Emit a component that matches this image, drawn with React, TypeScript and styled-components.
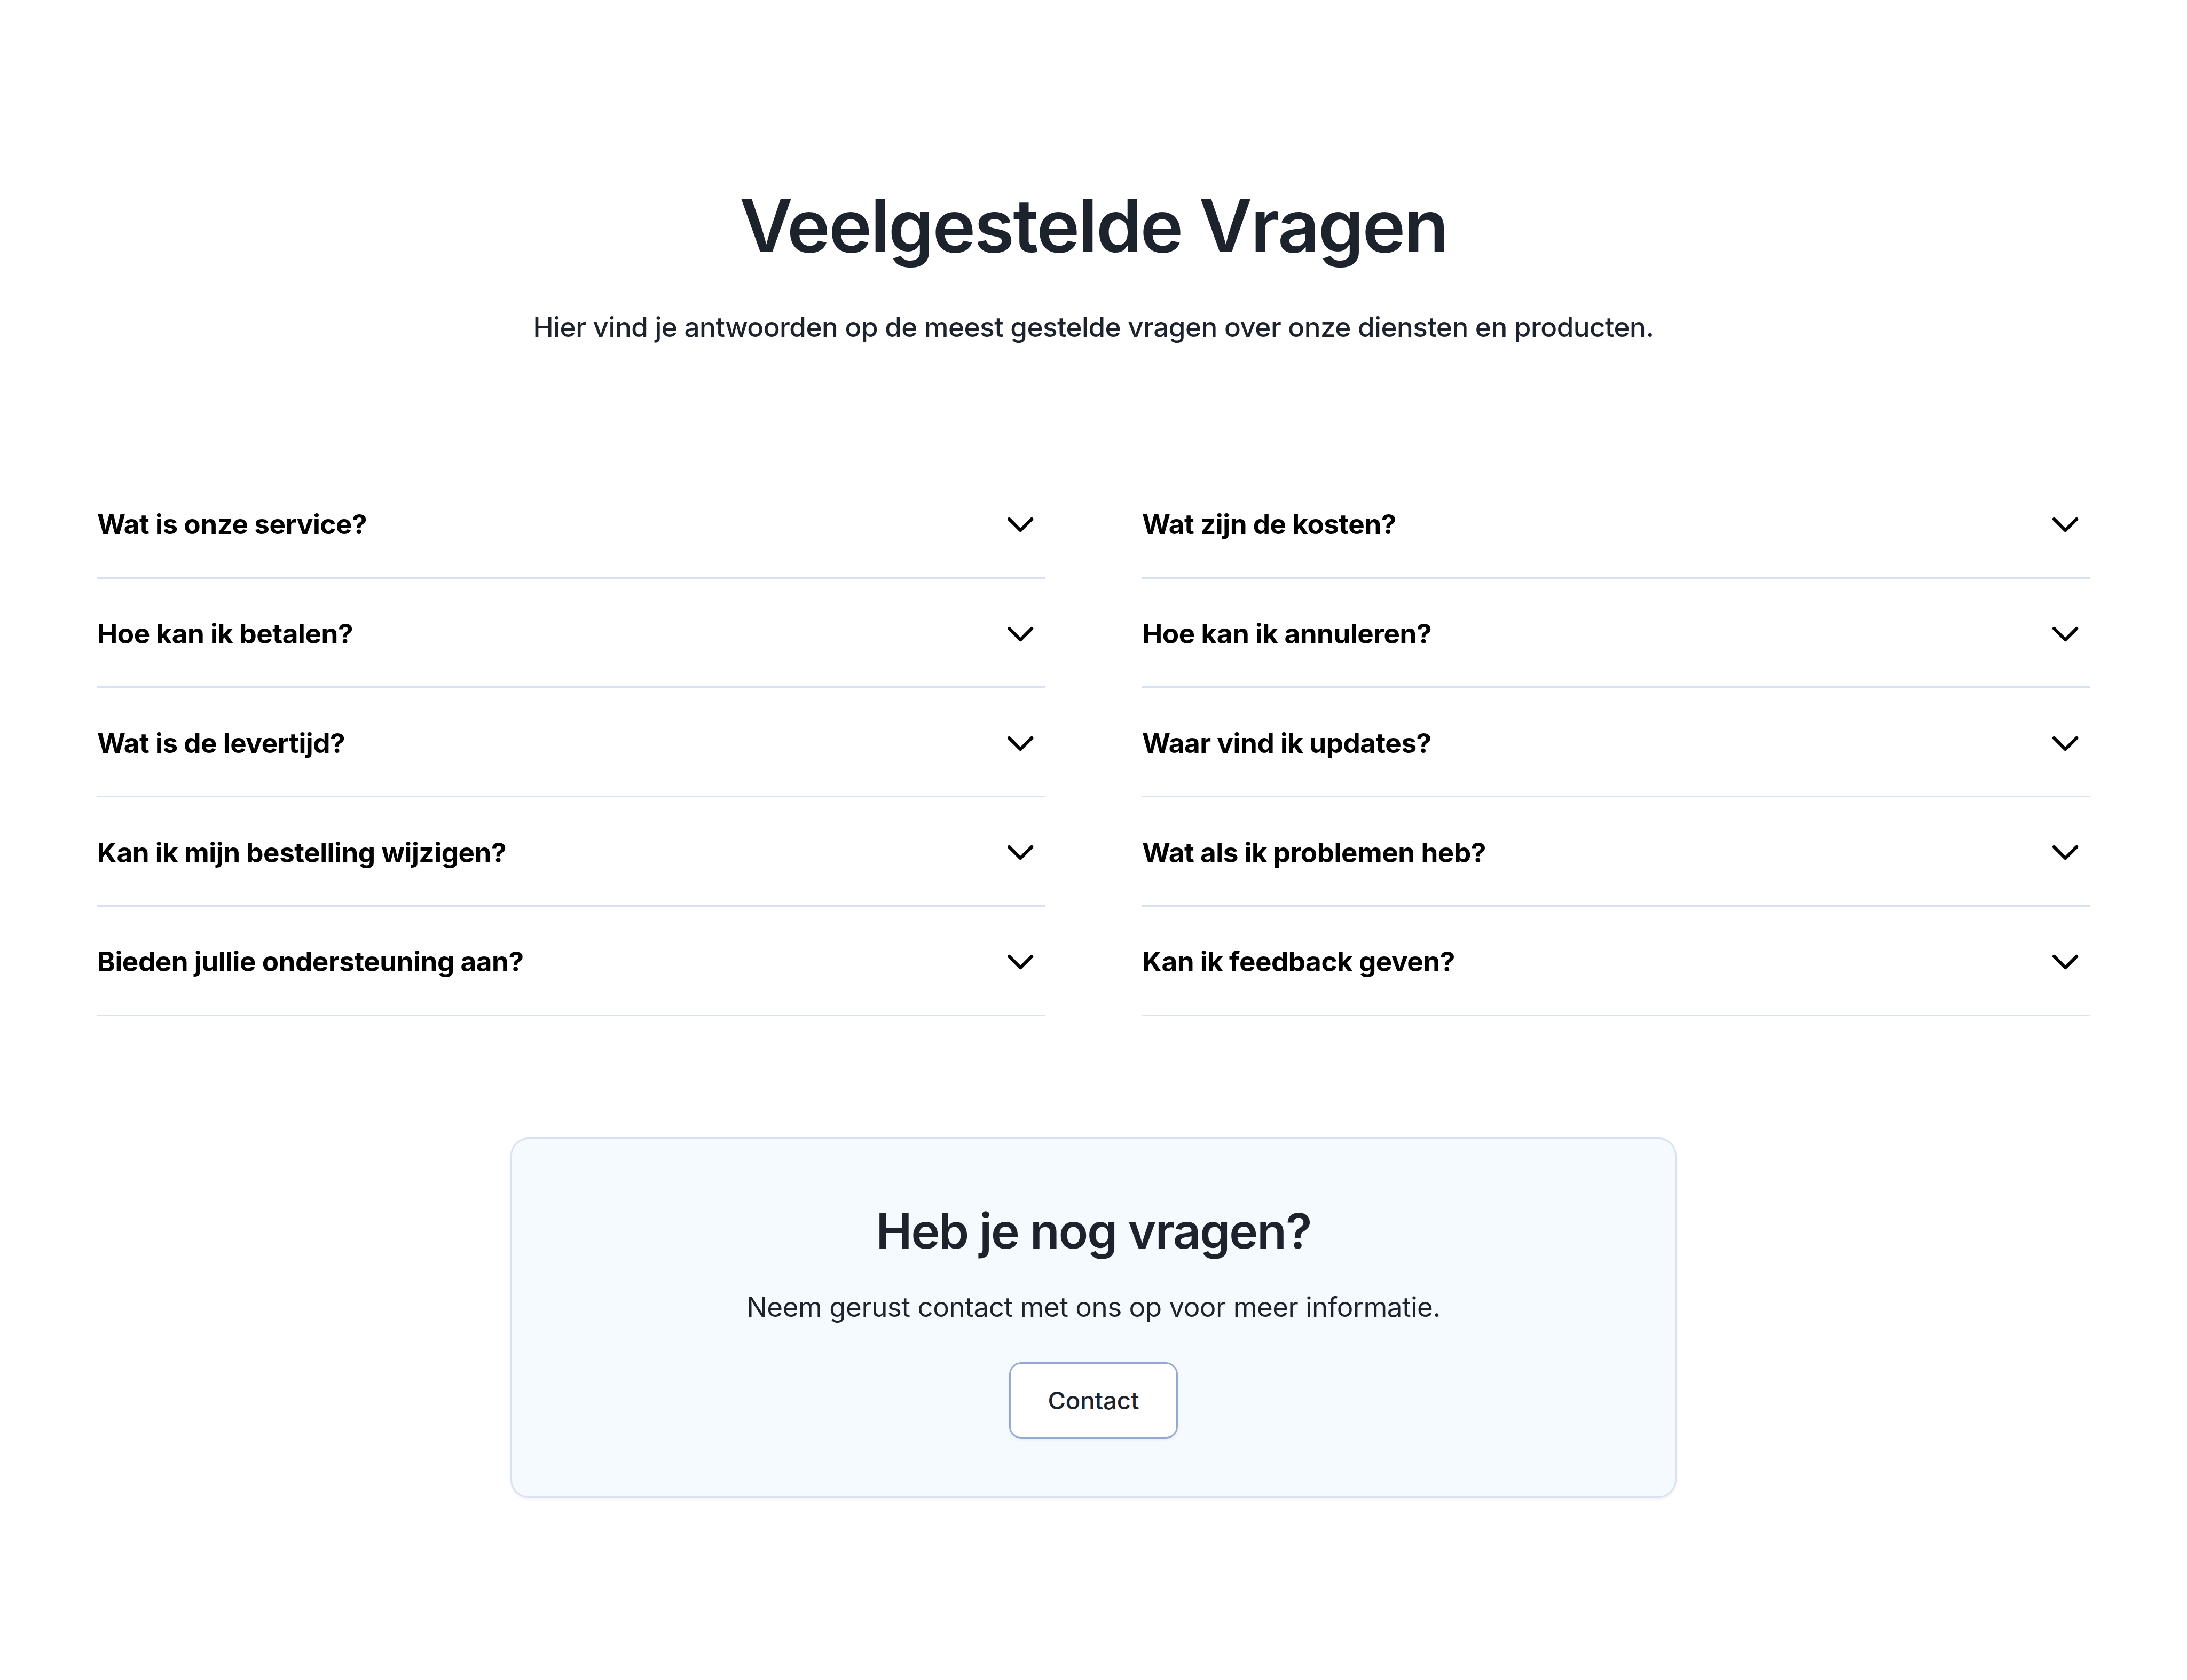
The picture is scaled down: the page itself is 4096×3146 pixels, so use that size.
import React from 'react';
import styled, { createGlobalStyle } from 'styled-components';

// 1rem is 16 units of a 1440 wide layout
const GlobalStyle = createGlobalStyle`
  *, *::before, *::after {
    box-sizing: border-box;
  }

  html {
    font-size: calc(100vw / 90);
  }

  body {
    margin: 0;
    background: #ffffff;
    color: #1c232d;
    font-family: Inter, 'Liberation Sans', sans-serif;
    -webkit-font-smoothing: antialiased;
  }

  h1, h2, p {
    margin: 0;
  }
`;

const Section = styled.section`
  display: flex;
  flex-direction: column;
  align-items: center;
  min-height: 69.125rem;
  padding: 7rem 4rem;
`;

const Header = styled.header`
  display: flex;
  flex-direction: column;
  align-items: center;
  gap: 1.025rem;
  margin-bottom: 4.975rem;
  text-align: center;
`;

const Title = styled.h1`
  font-size: 3rem;
  font-weight: 600;
  line-height: 4.5625rem;
  letter-spacing: -0.0185em;
`;

const Subtitle = styled.p`
  font-size: 1.125rem;
  font-weight: 500;
  line-height: 1.75rem;
  letter-spacing: -0.0099em;
`;

const FaqGrid = styled.div`
  display: grid;
  grid-template-columns: 1fr 1fr;
  column-gap: 4rem;
  width: 100%;
  margin-bottom: 5rem;
`;

const FaqItem = styled.button`
  display: flex;
  align-items: center;
  justify-content: space-between;
  height: 4.5rem;
  padding: 0.0625rem 0.25rem 0 0;
  border: 0;
  border-bottom: 3px solid #d9e2f3;
  background: none;
  color: #000000;
  font-family: inherit;
  font-size: 1.125rem;
  font-weight: 700;
  letter-spacing: -0.0088em;
  text-align: left;
`;

const Chevron = styled.svg`
  width: 1.5rem;
  height: 1.5rem;
  fill: none;
  stroke: currentColor;
  stroke-width: 2.15;
  stroke-linecap: round;
  stroke-linejoin: round;
`;

const ContactCard = styled.div`
  display: flex;
  flex-direction: column;
  align-items: center;
  width: 48rem;
  height: 14.8125rem;
  padding-top: 2.275rem;
  border: 3px solid #d9e2f3;
  border-radius: 0.75rem;
  background: #f5faff;
  box-shadow: 0 0.0625rem 0.125rem rgba(0, 0, 0, 0.05);
  text-align: center;
`;

const CardTitle = styled.h2`
  font-size: 2rem;
  font-weight: 600;
  line-height: 3rem;
  letter-spacing: -0.0213em;
`;

const CardText = styled.p`
  margin-top: 0.75rem;
  font-size: 1.125rem;
  font-weight: 400;
  line-height: 1.75rem;
  letter-spacing: -0.0102em;
`;

const ContactButton = styled.button`
  width: 6.9375rem;
  height: 3.125rem;
  margin-top: 1.4075rem;
  padding: 0;
  border: 3px solid #94a9d1;
  border-radius: 0.5rem;
  background: #ffffff;
  box-shadow: 0 0.0625rem 0.125rem rgba(0, 0, 0, 0.05);
  color: #1c232d;
  font-family: inherit;
  font-size: 1rem;
  font-weight: 500;
  letter-spacing: -0.002em;
`;

const questions = [
  'Wat is onze service?',
  'Wat zijn de kosten?',
  'Hoe kan ik betalen?',
  'Hoe kan ik annuleren?',
  'Wat is de levertijd?',
  'Waar vind ik updates?',
  'Kan ik mijn bestelling wijzigen?',
  'Wat als ik problemen heb?',
  'Bieden jullie ondersteuning aan?',
  'Kan ik feedback geven?',
];

const App: React.FC = () => {
  return (
    <>
      <GlobalStyle />
      <Section>
        <Header>
          <Title>Veelgestelde Vragen</Title>
          <Subtitle>
            Hier vind je antwoorden op de meest gestelde vragen over onze diensten en producten.
          </Subtitle>
        </Header>

        <FaqGrid>
          {questions.map(question => (
            <FaqItem key={question} type="button">
              {question}
              <Chevron viewBox="0 0 24 24">
                <path d="M4.6 8.8 12 16.2l7.4-7.4" />
              </Chevron>
            </FaqItem>
          ))}
        </FaqGrid>

        <ContactCard>
          <CardTitle>Heb je nog vragen?</CardTitle>
          <CardText>Neem gerust contact met ons op voor meer informatie.</CardText>
          <ContactButton type="button">Contact</ContactButton>
        </ContactCard>
      </Section>
    </>
  );
};

export default App;
